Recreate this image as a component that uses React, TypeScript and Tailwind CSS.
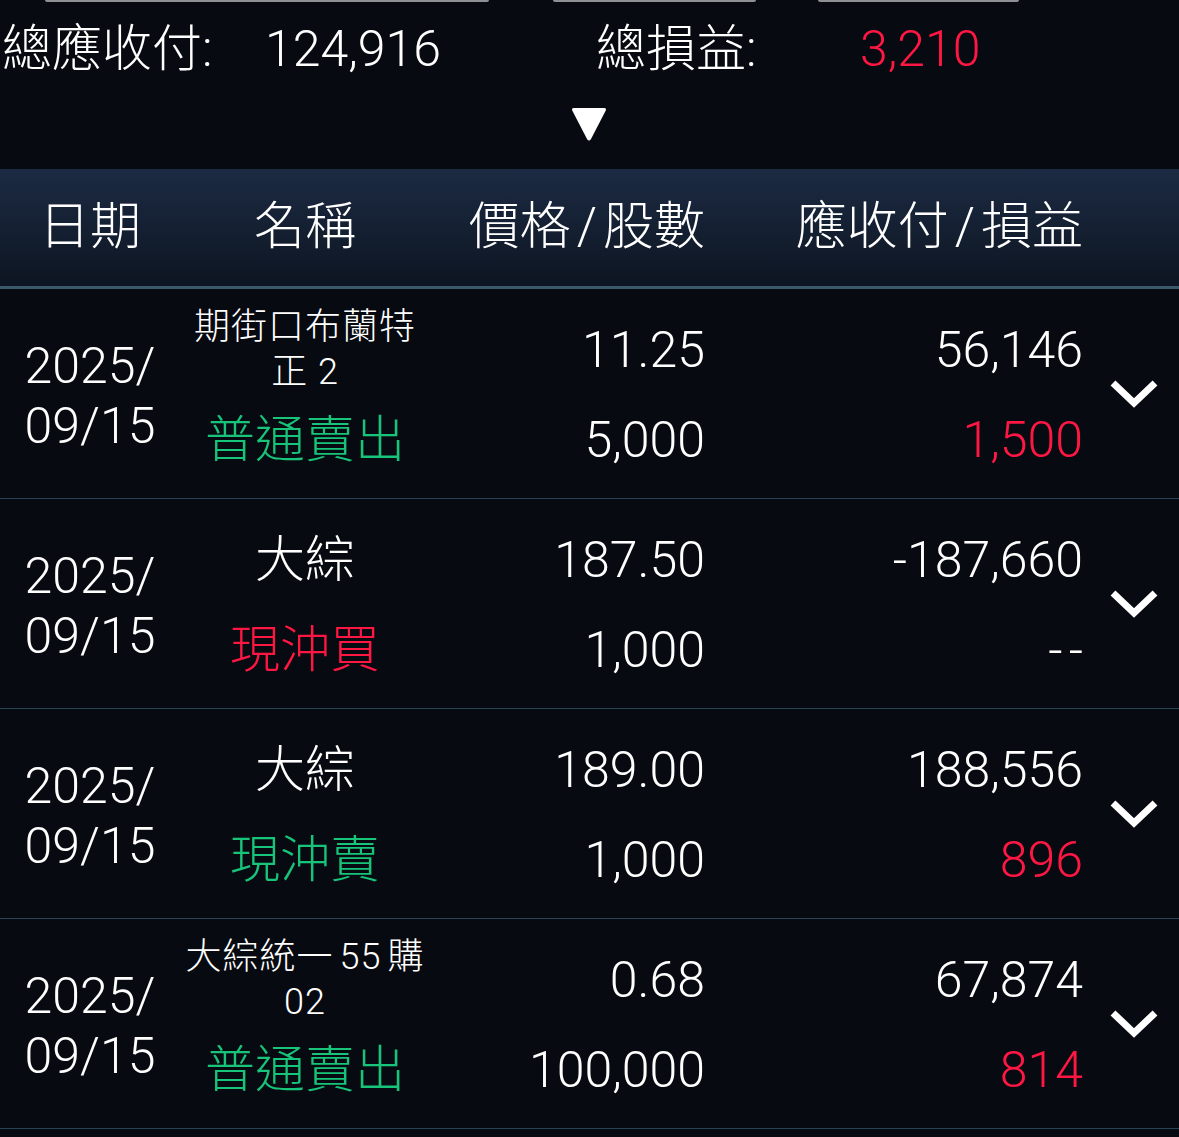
import React from "react";

const RED = "text-[#ff1744]";
const GREEN = "text-[#17c47a]";

type Row = {
  nameSmall?: React.ReactNode[];
  name?: string;
  type: string;
  typeColor: string;
  price: string;
  qty: string;
  amount: string;
  pnl: string;
  pnlColor: string;
};

const rows: Row[] = [
  {
    nameSmall: ["期街口布蘭特", "正 2"],
    type: "普通賣出",
    typeColor: GREEN,
    price: "11.25",
    qty: "5,000",
    amount: "56,146",
    pnl: "1,500",
    pnlColor: RED,
  },
  {
    name: "大綜",
    type: "現沖買",
    typeColor: RED,
    price: "187.50",
    qty: "1,000",
    amount: "-187,660",
    pnl: "--",
    pnlColor: "text-white",
  },
  {
    name: "大綜",
    type: "現沖賣",
    typeColor: GREEN,
    price: "189.00",
    qty: "1,000",
    amount: "188,556",
    pnl: "896",
    pnlColor: RED,
  },
  {
    nameSmall: [
      <span key="a">
        大綜統一<span className="mx-[6px]">55</span>購
      </span>,
      "02",
    ],
    type: "普通賣出",
    typeColor: GREEN,
    price: "0.68",
    qty: "100,000",
    amount: "67,874",
    pnl: "814",
    pnlColor: RED,
  },
];

function Chevron() {
  return (
    <svg width="48" height="32" viewBox="0 0 48 32" fill="none">
      <polyline
        points="3,5 24,25 45,5"
        stroke="white"
        strokeWidth="7"
        strokeLinecap="butt"
        strokeLinejoin="miter"
      />
    </svg>
  );
}

export default function App() {
  return (
    <div
      className="w-[1179px] h-[1137px] bg-[#070a10] text-white overflow-hidden font-light"
      style={{ fontFamily: "Roboto, 'Noto Sans CJK TC', sans-serif" }}
    >
      {/* bottoms of cut-off buttons */}
      <div className="flex h-[2px]">
        <div className="ml-[45px] w-[444px] h-[2px] rounded-b-full bg-[#8e9094]" />
        <div className="ml-[64px] w-[203px] h-[2px] rounded-b-full bg-[#8e9094]" />
        <div className="ml-[62px] w-[201px] h-[2px] rounded-b-full bg-[#8e9094]" />
      </div>

      {/* summary */}
      <div className="h-[167px] flex flex-col">
        <div className="mt-[22px] flex items-center h-[50px] text-[50px] leading-[50px]">
          <span className="w-[263px] pl-[2px] whitespace-nowrap">總應收付:</span>
          <span className="w-[331px] pl-[2px]">124,916</span>
          <span className="w-[264px] pl-[2px] whitespace-nowrap">總損益:</span>
          <span className={`pl-[2px] ${RED}`}>3,210</span>
        </div>
        <div className="flex justify-center mt-[31px] pr-[2px]">
          <svg width="38" height="38" viewBox="0 0 38 38">
            <path
              d="M4 3 L34 3 Q37 3 35.5 6 L21 34 Q19 37 17 34 L2.5 6 Q1 3 4 3 Z"
              fill="white"
            />
          </svg>
        </div>
      </div>

      {/* header */}
      <div className="h-[120px] bg-gradient-to-b from-[#1c2b43] to-[#0d1522] border-b-[3px] border-[#3a5a6b] grid grid-cols-[180px_250px_275px_378px_1fr] items-center text-[51px] leading-[51px] pb-[2px]">
        <div className="text-center">日期</div>
        <div className="text-center">名稱</div>
        <div className="text-right whitespace-nowrap">
          價格<span className="mx-[6px]">/</span>股數
        </div>
        <div className="text-right whitespace-nowrap">
          應收付<span className="mx-[6px]">/</span>損益
        </div>
        <div />
      </div>

      {/* rows */}
      {rows.map((r, i) => (
        <div
          key={i}
          className="h-[210px] border-b border-[#2a4457] grid grid-cols-[180px_250px_275px_378px_1fr]"
        >
          <div className="flex flex-col items-center justify-center text-[50px] leading-[60px] pt-[4px]">
            <span>2025/</span>
            <span>09/15</span>
          </div>
          <div className="flex flex-col pt-[16px]">
            <div className="h-[90px] flex flex-col items-center justify-center">
              {r.nameSmall ? (
                r.nameSmall.map((t, j) => (
                  <span
                    key={j}
                    className="text-[36px] leading-[45px] whitespace-nowrap tracking-[1px]"
                  >
                    {t}
                  </span>
                ))
              ) : (
                <span className="text-[50px] leading-[50px]">{r.name}</span>
              )}
            </div>
            <div
              className={`h-[90px] flex items-center justify-center text-[50px] leading-[50px] ${r.typeColor}`}
            >
              {r.type}
            </div>
          </div>
          <div className="flex flex-col pt-[16px] items-end text-[50px] leading-[50px]">
            <div className="h-[90px] flex items-center">{r.price}</div>
            <div className="h-[90px] flex items-center">{r.qty}</div>
          </div>
          <div className="flex flex-col pt-[16px] items-end text-[50px] leading-[50px]">
            <div className="h-[90px] flex items-center">{r.amount}</div>
            <div
              className={`h-[90px] flex items-center ${r.pnlColor} ${
                r.pnl === "--" ? "tracking-[6px] mr-[-6px]" : ""
              }`}
            >
              {r.pnl}
            </div>
          </div>
          <div className="flex items-center justify-center pl-[6px]">
            <Chevron />
          </div>
        </div>
      ))}
    </div>
  );
}
